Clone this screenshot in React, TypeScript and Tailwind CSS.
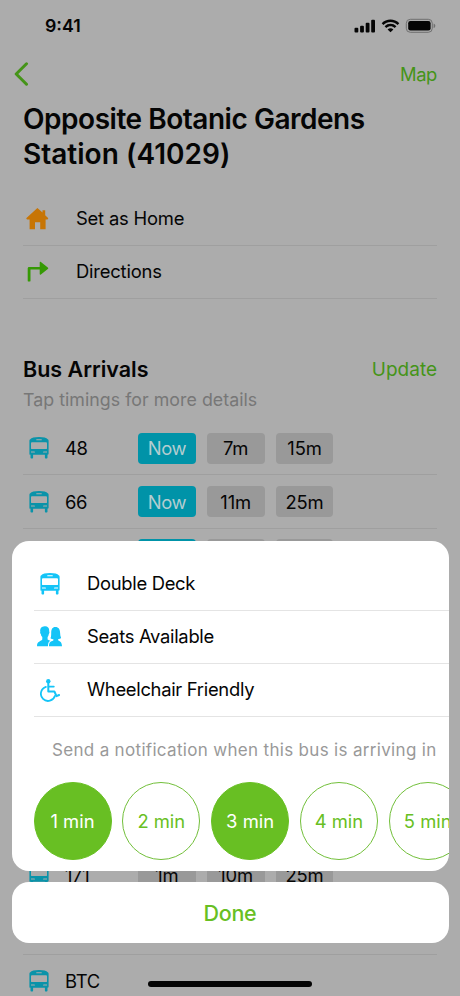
import type { ReactNode } from "react";

function BusIcon({ className = "" }: { className?: string }) {
  return (
    <svg viewBox="0 0 20 22" className={`h-[22px] w-5 shrink-0 ${className}`} fill="currentColor" fillRule="evenodd">
      <path d="M10 0C14.5 0 17.600.7 18.700 2.200c.6.3.9.8.9 1.600V16.600c0 .8-.4 1.200-1.100 1.200v2.800c0 .6-.5 1-1 1h-.6c-.6 0-1-.4-1-1v-2.800H4.100v2.800c0 .6-.4 1-1 1h-.6c-.5 0-1-.4-1-1v-2.800C.8 17.800.4 17.400.4 16.600V3.800c0-.8.3-1.300.9-1.600C2.400.7 5.500 0 10 0ZM7.300 2.200v1h5.400v-1ZM2.900 5.300c-.6 0-.9.3-.9.9v5c0 .6.3.9.9.9h14.200c.6 0 .9-.3.9-.9v-5c0-.6-.3-.9-.9-.9ZM2 14.500v1.100h4v-.1c0-.6-.4-1-1-1ZM15 14.500c-.6 0-1 .4-1 1v.1h4v-1.100Z" />
    </svg>
  );
}

function PeopleIcon() {
  return (
    <svg viewBox="0 0 25 21" className="h-[21px] w-[25px] shrink-0" fill="currentColor">
      <path d="M7.700.2C10.500 0 12.300 1.700 12.200 4.700c0 .6 0 1 .2 1.400.2.500-.1 1.600-.6 1.900-.2 1.500-.6 2.300-1.200 3.100v2.400c.9.7 1.800.9 2.800 1.300-1.700.9-2.300 2-2.500 5.400H0c0-2.700.6-4 2.500-4.800 1-.5 2-.8 2.800-1.800v-2.500C4.400 10.300 3.900 9.300 3.800 8c-.6-.4-.9-1.500-.5-2C2.700 2.400 4.400.4 7.700.2Z" />
      <path d="M18.300 1c3.400 0 4.700 2.400 4.800 5.700 0 2 .3 3.700 1 5.400-.7.700-1.800 1-3 1.100v1c1 1.100 3.700.9 3.900 5.900v.1H12c.1-4 1.400-4.500 3.100-5.200.7-.3 1.100-.4 1.300-.8v-1c-1.200-.1-2.200-.4-2.900-1 .7-1.700.7-3.500.7-5.500C14.300 3.300 15.300 1 18.300 1Z" />
    </svg>
  );
}

function WheelchairIcon() {
  return (
    <svg viewBox="0 0 20 23" className="h-[23px] w-5 shrink-0" fill="none" stroke="currentColor" strokeWidth="1.800">
      <circle cx="8.300" cy="2.200" r="2.200" fill="currentColor" stroke="none" />
      <path d="M8.300 4v8.500h6.100l2.100 4.600 2.600-1.100" strokeWidth="2" strokeLinecap="round" strokeLinejoin="round" />
      <path d="M8.600 7.600h5.200" strokeLinecap="round" />
      <path d="M5.900 7.900a7.200 7.200 0 1 0 9.100 8.900" strokeLinecap="round" />
    </svg>
  );
}

function StatusBar() {
  return (
    <header className="flex h-[50px] items-center justify-between pl-[45px] pr-[24px] pt-px">
      <span className="pt-px text-[17.8px] font-semibold">9:41</span>
      <svg viewBox="0 0 82 16" className="h-4 w-[82px]" fill="currentColor">
        <rect x="0.500" y="9.700" width="3.800" height="4.800" rx="1" />
        <rect x="6.100" y="7.700" width="3.800" height="6.800" rx="1" />
        <rect x="11.700" y="4.800" width="3.800" height="9.700" rx="1" />
        <rect x="17.200" y="1.700" width="3.800" height="12.800" rx="1" />
        <path d="M27.700 5.200C32.200.2 40.700.2 45.300 5.200l-1.700 1.700c-3.900-4-10.300-4-14.200 0Z" />
        <path d="M30.600 8.300c3.300-3.300 8.500-3.300 11.800 0l-1.700 1.700c-2.400-2.300-6-2.300-8.400 0Z" />
        <path d="m36.500 14.300-2.900-2.900c1.700-1.500 4.100-1.500 5.800 0Z" />
        <rect x="52.300" y="1.300" width="26" height="13" rx="4" fill="none" stroke="#707070" strokeWidth="1" />
        <rect x="54.200" y="3.100" width="22.400" height="9.400" rx="2.200" />
        <path d="M79.600 5.500v4.600c1.100-.4 1.700-1.300 1.700-2.300s-.6-1.900-1.700-2.300Z" fill="#707070" />
      </svg>
    </header>
  );
}

function ActionRow({ icon, label }: { icon: ReactNode; label: string }) {
  return (
    <div className="flex h-[53.3px] items-center border-b border-[#9f9f9f] text-[18.4px]">
      <span className="flex w-[53px] pl-[3px]">{icon}</span>
      <span className="tracking-[-0.2px]">{label}</span>
    </div>
  );
}

type Arrival = { bus: string; times: string[] };

const arrivals: Arrival[] = [
  { bus: "48", times: ["Now", "7m", "15m"] },
  { bus: "66", times: ["Now", "11m", "25m"] },
  { bus: "67", times: ["Now", "9m", "18m"] },
  { bus: "151", times: ["3m", "12m", "20m"] },
  { bus: "153", times: ["5m", "14m", "24m"] },
  { bus: "154", times: ["2m", "11m", "19m"] },
  { bus: "156", times: ["4m", "13m", "22m"] },
  { bus: "170", times: ["6m", "15m", "27m"] },
  { bus: "171", times: ["1m", "10m", "25m"] },
  { bus: "186", times: ["8m", "16m", "28m"] },
  { bus: "BTC", times: [] },
];

function ArrivalRow({ bus, times }: Arrival) {
  return (
    <div className="flex h-[53.3px] shrink-0 items-center border-b border-[#9f9f9f] pl-[5.500px] text-[18.400px]">
      <BusIcon className="text-[#0a93a9]" />
      <span className="ml-[16.500px] w-[73px] pt-[2px] tracking-[-0.3px]">{bus}</span>
      <div className="flex gap-[11px]">
        {times.map((t) => (
          <span
            key={t}
            className={`flex h-[31px] w-[57.800px] items-center justify-center rounded-[4px] pt-[2px] ${
              t === "Now" ? "bg-[#0093a8] tracking-[-0.5px] text-[#b4cdd0]" : "bg-[#999] tracking-[-0.1px]"
            }`}
          >
            {t}
          </span>
        ))}
      </div>
    </div>
  );
}

function FeatureRow({ icon, label }: { icon: ReactNode; label: string }) {
  return (
    <div className="ml-[22px] flex h-[53.300px] items-center border-b border-[#e4e4e4] text-[18.400px]">
      <span className="flex w-8 justify-center text-[#14c4f7]">{icon}</span>
      <span className="ml-[21.500px] tracking-[-0.3px]">{label}</span>
    </div>
  );
}

function MinuteButton({ minutes, selected }: { minutes: number; selected: boolean }) {
  return (
    <button
      className={`size-[78px] shrink-0 rounded-full border pt-[2px] text-[18.400px] ${
        selected ? "border-[#68bf23] bg-[#68bf23] text-white" : "border-[#72bf3a] text-[#68bf23]"
      }`}
    >
      {`${minutes} min`}
    </button>
  );
}

export default function App() {
  return (
    <div className="relative h-[996px] w-[460px] overflow-hidden bg-[#acacac] font-['Inter','Liberation_Sans',sans-serif] text-[#050505]">
      <StatusBar />
      <nav className="flex h-[48px] items-center justify-between pl-[14px] pr-[23px] text-[#459418]">
        <svg viewBox="0 0 15 24" className="h-6 w-[15px]" fill="none" stroke="currentColor" strokeWidth="3" strokeLinecap="round" strokeLinejoin="round">
          <path d="M12.500 1.800 2.200 12l10.300 10.200" />
        </svg>
        <span className="pt-px text-[18.400px] tracking-[-0.4px]">Map</span>
      </nav>

      <main className="px-[23px]">
        <h1 className="mt-[4px] whitespace-nowrap text-[28px] font-semibold leading-[34.500px]">
          <span className="block tracking-[-0.470px]">Opposite Botanic Gardens</span>
          <span className="block tracking-[0.020px]">Station (41029)</span>
        </h1>

        <section className="mt-[21.500px]">
          <ActionRow
            label="Set as Home"
            icon={
              <svg viewBox="0 0 23 22" className="h-[22px] w-[23px]" fill="#c77505">
                <path d="M11.400 0 16.500 4.600V2.300h2.700v4.900L22.300 10.200 21.500 11.400H19.600V21.300h-5.400v-7H9v7H3.600v-9.900H1L.2 10.300Z" />
              </svg>
            }
          />
          <ActionRow
            label="Directions"
            icon={
              <svg viewBox="0 0 23 22" className="h-[22px] w-[23px]" fill="#359904">
                <path d="M1.700 7.400c0-.9.500-1.500 1.400-1.500H13.700V1.500c0-.8.600-1.100 1.200-.6l6.900 5.600c.6.500.6 1.100 0 1.600l-6.900 5.500c-.6.500-1.200.2-1.200-.6V8.600H4.500v10.800c0 .8-.4 1.200-1.100 1.200h-.6c-.7 0-1.100-.4-1.100-1.200Z" />
              </svg>
            }
          />
        </section>

        <section className="mt-[54.500px]">
          <div className="flex h-8 items-center justify-between">
            <h2 className="text-[21.500px] font-semibold">Bus Arrivals</h2>
            <span className="pt-px text-[19px] text-[#459418]">Update</span>
          </div>
          <p className="h-[36.500px] text-[17.800px] leading-[27px] tracking-[0.030px] text-[#777]">Tap timings for more details</p>
          <div className="flex flex-col">
            {arrivals.map((a) => (
              <ArrivalRow key={a.bus} {...a} />
            ))}
          </div>
        </section>
      </main>

      <div className="absolute left-[11.500px] top-[541px] flex w-[437px] flex-col gap-[11px]">
        <section className="h-[330px] overflow-hidden rounded-[17px] bg-white pt-[16.500px]">
          <FeatureRow icon={<BusIcon />} label="Double Deck" />
          <FeatureRow icon={<PeopleIcon />} label="Seats Available" />
          <FeatureRow icon={<WheelchairIcon />} label="Wheelchair Friendly" />
          <p className="ml-[40.500px] mt-[20.500px] h-6 whitespace-nowrap text-[17px] leading-6 tracking-[0.320px] text-[#999]">
            Send a notification when this bus is arriving in
          </p>
          <div className="ml-[22px] mt-[20px] flex gap-[10.800px]">
            {[1, 2, 3, 4, 5].map((m) => (
              <MinuteButton key={m} minutes={m} selected={m === 1 || m === 3} />
            ))}
          </div>
        </section>
        <button className="h-[61px] rounded-[17px] bg-white pt-[2px] text-[21.500px] font-medium tracking-[-0.3px] text-[#68bf23]">Done</button>
      </div>

      <div className="absolute left-[148px] top-[981px] h-[6px] w-[164px] rounded-full bg-[#050505]" />
    </div>
  );
}
